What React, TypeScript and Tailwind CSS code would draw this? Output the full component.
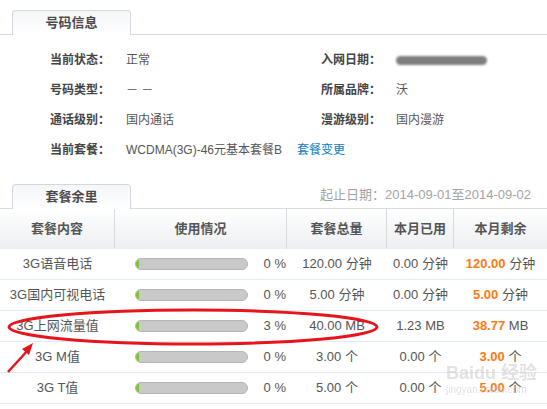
import React from 'react';

const FONT = "font-['Liberation_Sans','Noto_Sans_CJK_SC',sans-serif]";

const infoRows = [
  { l: '当前状态：', v: '正常', rl: '入网日期：', rv: 'blur' },
  { l: '号码类型：', v: '－ －', rl: '所属品牌：', rv: '沃' },
  { l: '通话级别：', v: '国内通话', rl: '漫游级别：', rv: '国内漫游' },
  { l: '当前套餐：', v: 'WCDMA(3G)-46元基本套餐B', link: '套餐变更' },
];

const usage = [
  { name: '3G语音电话', pct: '0 %', total: '120.00', used: '0.00', left: '120.00', unit: '分钟' },
  { name: '3G国内可视电话', pct: '0 %', total: '5.00', used: '0.00', left: '5.00', unit: '分钟' },
  { name: '3G上网流量值', pct: '3 %', total: '40.00', used: '1.23', left: '38.77', unit: 'MB' },
  { name: '3G M值', pct: '0 %', total: '3.00', used: '0.00', left: '3.00', unit: '个' },
  { name: '3G T值', pct: '0 %', total: '5.00', used: '0.00', left: '5.00', unit: '个' },
];

const Tab: React.FC<{ title: string; right?: React.ReactNode }> = ({ title, right }) => (
  <div className="flex items-end border-b border-[#d9dde2] h-[25px]">
    <div className="ml-[12px] w-[119px] h-[25px] -mb-px border border-b-0 border-[#d3d8de] rounded-t-[4px] bg-gradient-to-b from-[#f4f6f8] to-white flex items-center justify-center text-[13px] font-bold text-[#4a4a4a]">
      {title}
    </div>
    {right}
  </div>
);

const Bar: React.FC<{ p: number }> = ({ p }) => (
  <div className="w-[113px] h-[12px] rounded-full border border-[#b5b5b5] bg-[#c9c9c9] overflow-hidden">
    <div className="h-full rounded-full bg-[#79c72b]" style={{ width: `${Math.max(p, 3)}%` }} />
  </div>
);

export default function App() {
  return (
    <div className={`relative w-[547px] h-[409px] bg-white overflow-hidden ${FONT} text-[12px] text-[#555]`}>
      <div className="pt-[10px]">
        <Tab title="号码信息" />
      </div>

      <div className="pt-[10px]">
        {infoRows.map((r, i) => (
          <div key={i} className="flex items-center h-[30px]">
            <div className="w-[76px] pl-[50px] shrink-0 font-bold text-[#444] whitespace-nowrap">{r.l}</div>
            <div className="ml-[50px] w-[195px] flex items-center whitespace-nowrap">
              <span>{r.v}</span>
              {r.link && <span className="ml-[15px] text-[#0b7dc3]">{r.link}</span>}
            </div>
            {r.rl && (
              <>
                <div className="w-[75px] font-bold text-[#444] whitespace-nowrap">{r.rl}</div>
                <div className="whitespace-nowrap">
                  {r.rv === 'blur' ? (
                    <div className="w-[91px] h-[9px] rounded-full bg-[#7e7e7e] blur-[1px]" />
                  ) : (
                    r.rv
                  )}
                </div>
              </>
            )}
          </div>
        ))}
      </div>

      <div className="pt-[19px]">
        <Tab
          title="套餐余里"
          right={
            <div className="ml-auto mr-[16px] self-center text-[13px] text-[#a3a3a3] pb-[2px]">
              起止日期：2014-09-01至2014-09-02
            </div>
          }
        />
      </div>

      <div className="grid grid-cols-[115px_172px_100px_67px_93px] text-[13px]">
        {['套餐内容', '使用情况', '套餐总量', '本月已用', '本月剩余'].map((h, i) => (
          <div
            key={h}
            className={`h-[40px] flex items-center justify-center font-bold text-[#555] bg-gradient-to-b from-white to-[#eceef1] ${i < 4 ? 'border-r border-[#d9dcdf]' : ''}`}
          >
            {h}
          </div>
        ))}
        {usage.map((u) => (
          <React.Fragment key={u.name}>
            <div className="h-[31px] flex items-center justify-center border-b border-[#e3ebf2]">{u.name}</div>
            <div className="h-[31px] flex items-center border-b border-[#e3ebf2] pl-[20px]">
              <Bar p={parseFloat(u.pct)} />
              <span className="ml-auto pr-[1px]">{u.pct}</span>
            </div>
            <div className="h-[31px] flex items-center justify-center border-b border-[#e3ebf2]">
              {u.total} {u.unit}
            </div>
            <div className="h-[31px] flex items-center justify-center border-b border-[#e3ebf2]">
              {u.used} {u.unit}
            </div>
            <div className="h-[31px] flex items-center justify-center border-b border-[#e3ebf2]">
              <span className="text-[#ff7a12] font-bold">{u.left}</span>&nbsp;{u.unit}
            </div>
          </React.Fragment>
        ))}
      </div>

      {/* annotation */}
      <svg className="absolute left-0 top-0 pointer-events-none" width="547" height="409">
        <ellipse cx="193" cy="327" rx="184" ry="17" fill="none" stroke="#e8141b" strokeWidth="3" />
        <line x1="8" y1="372" x2="28" y2="350" stroke="#e8141b" strokeWidth="2.5" />
        <polygon points="33,343 22,349 29,355" fill="#e8141b" />
      </svg>

      <div className="absolute left-[446px] top-[364px] text-[#cfcfcf] opacity-60 pointer-events-none leading-none whitespace-nowrap">
        <div className="text-[18px] font-bold">Baidu 经验</div>
        <div className="text-[10px] mt-[3px]">jingyan.baidu.com</div>
      </div>
    </div>
  );
}
